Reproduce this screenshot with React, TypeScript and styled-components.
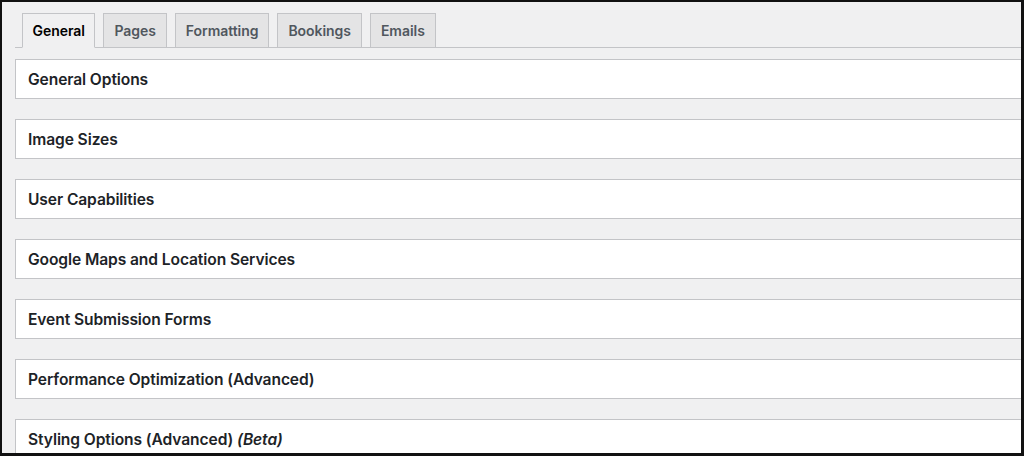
import React from "react";
import styled, { createGlobalStyle } from "styled-components";

const GlobalStyle = createGlobalStyle`
  html, body {
    margin: 0;
    padding: 0;
    background: #111;
  }
  * {
    box-sizing: border-box;
  }
`;

const Frame = styled.div`
  width: 1024px;
  height: 456px;
  border-style: solid;
  border-color: #111;
  border-width: 2px 3px 3px 2px;
  background: #f0f0f1;
  overflow: hidden;
  font-family: Inter, "Noto Sans", "Liberation Sans", sans-serif;
  color: #1d2327;
`;

const Wrap = styled.div`
  padding: 11px 0 0 13px;
  width: calc(100% + 20px);
`;

const TabBar = styled.nav`
  display: flex;
  align-items: flex-end;
  gap: 8px;
  padding-left: 7px;
  border-bottom: 1px solid #c3c4c7;
  height: 35px;
`;

const Tab = styled.a<{ $active?: boolean }>`
  display: block;
  height: ${(p) => (p.$active ? "35px" : "34px")};
  margin-bottom: ${(p) => (p.$active ? "-1px" : "0")};
  padding: 0 ${(p) => (p.$active ? "9.5px" : "10px")};
  line-height: 34px;
  font-size: 14px;
  font-weight: 600;
  letter-spacing: -0.05px;
  border: 1px solid #c3c4c7;
  border-bottom: ${(p) => (p.$active ? "1px solid #f0f0f1" : "none")};
  background: ${(p) => (p.$active ? "#f0f0f1" : "#e4e4e5")};
  color: ${(p) => (p.$active ? "#000" : "#50575e")};
  cursor: pointer;
`;

const Panels = styled.div`
  display: flex;
  flex-direction: column;
  gap: 20px;
  margin-top: 11px;
`;

const Panel = styled.div`
  height: 40px;
  background: #fff;
  border: 1px solid #c3c4c7;
  display: flex;
  align-items: center;
  padding-left: 12px;
`;

const Title = styled.h2`
  margin: 0;
  font-size: 15.6px;
  font-weight: 600;
  letter-spacing: -0.1px;
  color: #1d2327;

  em {
    font-style: italic;
  }
`;

const tabs = ["General", "Pages", "Formatting", "Bookings", "Emails"];

const panels: React.ReactNode[] = [
  "General Options",
  "Image Sizes",
  "User Capabilities",
  "Google Maps and Location Services",
  "Event Submission Forms",
  "Performance Optimization (Advanced)",
  <>
    Styling Options (Advanced) <em>(Beta)</em>
  </>,
];

export default function App() {
  return (
    <>
      <GlobalStyle />
      <Frame>
        <Wrap>
          <TabBar>
            {tabs.map((t, i) => (
              <Tab key={t} $active={i === 0}>
                {t}
              </Tab>
            ))}
          </TabBar>
          <Panels>
            {panels.map((p, i) => (
              <Panel key={i}>
                <Title>{p}</Title>
              </Panel>
            ))}
          </Panels>
        </Wrap>
      </Frame>
    </>
  );
}
